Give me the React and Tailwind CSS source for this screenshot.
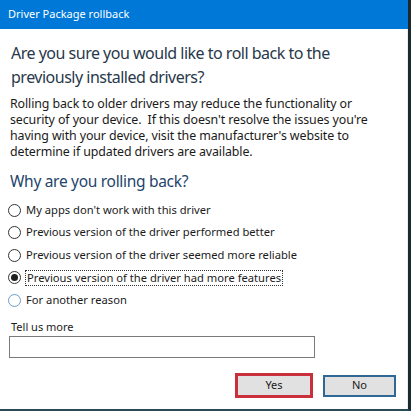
import { useState } from 'react';

const reasons = [
  "My apps don't work with this driver",
  'Previous version of the driver performed better',
  'Previous version of the driver seemed more reliable',
  'Previous version of the driver had more features',
  'For another reason',
];

function Radio({ label, checked, hover, onSelect }) {
  return (
    <label className="flex h-[22.5px] cursor-default items-center gap-[4px]" onClick={onSelect}>
      <span
        className={`flex h-[13px] w-[13px] shrink-0 items-center justify-center rounded-full border bg-white ${
          hover ? 'border-[#6a9dcb]' : 'border-[#333333]'
        }`}
      >
        {checked && <span className="h-[7px] w-[7px] rounded-full bg-[#1f1f1f]" />}
      </span>
      <span className={checked ? 'border border-dotted border-[#333] px-px leading-[14px]' : 'px-px'}>{label}</span>
    </label>
  );
}

export default function App() {
  const [choice, setChoice] = useState(3);

  return (
    <div
      className="flex h-[411px] w-[411px] flex-col overflow-hidden border-r-[3px] border-b-[2px] border-r-[#1c2a30] border-b-[#2c4a55] bg-white text-[#1a1a1a]"
      style={{ fontFamily: '"Noto Sans", "Open Sans", sans-serif' }}
    >
      <div className="flex h-[29px] shrink-0 items-center bg-[#0078d7] px-[8px] text-[11px] text-white">
        Driver Package rollback
      </div>

      <div className="flex flex-1 flex-col border-r border-[#e6eef3] pl-[10px] pr-[6px]">
        <h1 className="mt-[12px] w-[360px] pl-px text-[16px] font-normal leading-[24px] tracking-[-0.5px] text-[#28384a]">
          Are you sure you would like to roll back to the previously installed drivers?
        </h1>

        <p className="mt-[7px] w-[385px] text-[12.4px] leading-[16px] tracking-[-0.1px]">
          Rolling back to older drivers may reduce the functionality or security of your device.&nbsp; If this
          doesn't resolve the issues you're having with your device, visit the manufacturer's website to
          determine if updated drivers are available.
        </p>

        <h2 className="mt-[10px] text-[15.5px] font-normal leading-[22px] tracking-[-0.3px] text-[#24446a]">
          Why are you rolling back?
        </h2>

        <div className="mt-[7px] -ml-[2px] flex flex-col text-[11.2px]">
          {reasons.map((r, i) => (
            <Radio key={r} label={r} checked={choice === i} hover={i === 4} onSelect={() => setChoice(i)} />
          ))}
        </div>

        <div className="mt-[7px] pl-px text-[11px] leading-[16px]">Tell us more</div>
        <input
          className="mt-[1px] -ml-px h-[22px] w-[306px] border border-[#7a7a7a] bg-white px-1 outline-none"
          type="text"
        />

        <div className="mt-[15px] flex justify-end gap-[10px] pr-[5px] text-[11px]">
          <button className="flex h-[25px] w-[78px] items-center justify-center border-[3px] border-[#c9303b] bg-[#e1e1e1]">
            Yes
          </button>
          <button className="mt-[2px] flex h-[22px] w-[73px] items-center justify-center border-2 border-[#2f6894] bg-[#e1e1e1]">
            No
          </button>
        </div>
      </div>
    </div>
  );
}
